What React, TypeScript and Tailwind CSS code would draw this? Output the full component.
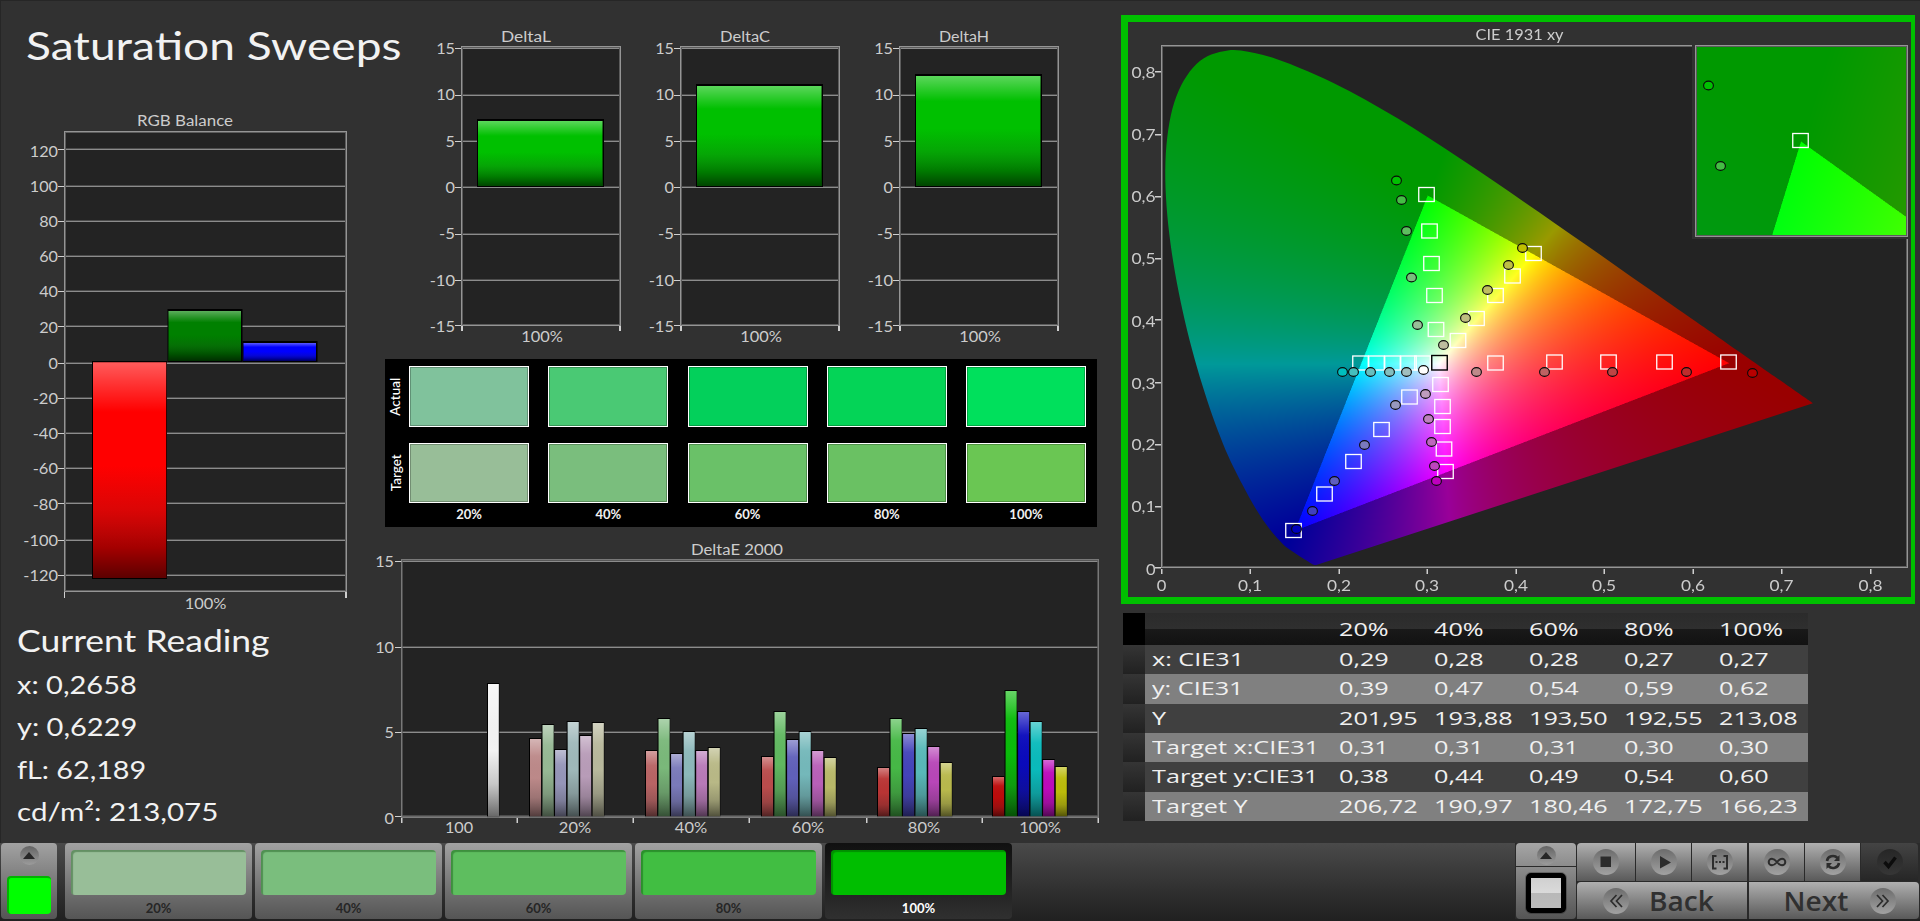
import React, { useLayoutEffect, useRef } from "react";

const FONT = 'Lato, "Open Sans", sans-serif';

/* ---------- shared chart pieces ---------- */

function Label({ x, y, w, size = 15.5, anchor = "start", fill = "#cccccc", children }: {
  x: number; y: number; w?: number; size?: number; anchor?: "start" | "middle" | "end"; fill?: string; children: string;
}) {
  return (
    <text x={x} y={y} fontFamily={FONT} fontSize={size} fill={fill} textAnchor={anchor} textLength={w} lengthAdjust="spacingAndGlyphs">
      {children}
    </text>
  );
}

function axisWidth(s: string) {
  let w = 0;
  for (const c of s) w += c === "-" ? 6.5 : c === "," ? 5 : c === "%" ? 13.5 : 9.4;
  return w;
}

function Axis({ x, y, anchor, children }: { x: number; y: number; anchor: "middle" | "end"; children: string }) {
  return <Label x={x} y={y} w={axisWidth(children)} anchor={anchor}>{children}</Label>;
}

function Shades() {
  return (
    <defs>
      <linearGradient id="gloss" x1="0" y1="0" x2="0" y2="1">
        <stop offset="0" stopColor="#fff" stopOpacity="0.36" />
        <stop offset="0.1" stopColor="#fff" stopOpacity="0.2" />
        <stop offset="0.23" stopColor="#fff" stopOpacity="0" />
        <stop offset="0.48" stopColor="#202020" stopOpacity="0" />
        <stop offset="0.68" stopColor="#202020" stopOpacity="0.16" />
        <stop offset="0.86" stopColor="#000" stopOpacity="0.36" />
        <stop offset="1" stopColor="#000" stopOpacity="0.64" />
      </linearGradient>
      <linearGradient id="sheen" x1="0" y1="0" x2="0" y2="1">
        <stop offset="0" stopColor="#fff" stopOpacity="0.38" />
        <stop offset="0.22" stopColor="#fff" stopOpacity="0.04" />
        <stop offset="0.5" stopColor="#202020" stopOpacity="0" />
        <stop offset="0.75" stopColor="#202020" stopOpacity="0.2" />
        <stop offset="1" stopColor="#000" stopOpacity="0.58" />
      </linearGradient>
    </defs>
  );
}

function Bar({ x, y, w, h, color, shade = "gloss", edge = 2 }: { x: number; y: number; w: number; h: number; color: string; shade?: string; edge?: number }) {
  return (
    <g>
      <rect x={x} y={y} width={w} height={h} fill="#000" />
      <rect x={x + 1} y={y + edge} width={w - edge - 0.5} height={h - edge - 1} fill={color} />
      <rect x={x + 1} y={y + edge} width={w - edge - 0.5} height={h - edge - 1} fill={`url(#${shade})`} />
    </g>
  );
}

function Frame({ l, t, r, b }: { l: number; t: number; r: number; b: number }) {
  return (
    <g fill="none" shapeRendering="crispEdges">
      <rect x={l + 1.5} y={t + 1.5} width={r - l - 3} height={b - t - 3} stroke="#5c5c5c" />
      <rect x={l + 0.5} y={t + 0.5} width={r - l - 1} height={b - t - 1} stroke="#959595" />
    </g>
  );
}

function GridLine({ l, r, y }: { l: number; r: number; y: number }) {
  return (
    <g shapeRendering="crispEdges">
      <rect x={l} y={y - 1} width={r - l} height={1} fill="#4c4c4c" />
      <rect x={l} y={y} width={r - l} height={1} fill="#8c8c8c" />
      <rect x={l - 6} y={y} width={6} height={1} fill="#cfcfcf" />
    </g>
  );
}

/* ---------- RGB balance ---------- */

const rgbTicks: [string, number, number][] = [
  ["120", 149, 157], ["100", 186, 192], ["80", 221, 227], ["60", 256, 262], ["40", 291, 297], ["20", 326, 333], ["0", 363, 368.5],
  ["-20", 398, 403.5], ["-40", 433, 438.5], ["-60", 468, 473.5], ["-80", 503, 510], ["-100", 540, 545.5], ["-120", 575, 580.5],
];

function RgbBalance() {
  return (
    <svg viewBox="0 100 385 515" className="h-[515px] w-[385px] shrink-0 overflow-visible">
      <Shades />
      <Label x={137} y={126} w={96}>RGB Balance</Label>
      <rect x={64} y={131} width={283} height={461} fill="#232323" />
      {rgbTicks.map(([s, y, b]) => (
        <g key={s}>
          <GridLine l={64} r={346} y={y} />
          <Axis x={58} y={b} anchor="end">{s}</Axis>
        </g>
      ))}
      <Frame l={64} t={131} r={347} b={592} />
      <Bar x={92} y={361} w={75} h={218} color="#ff0000" edge={1.3} />
      <Bar x={167.5} y={309} w={75} h={53} color="#008000" />
      <Bar x={242.5} y={341} w={75} h={21} color="#0000ff" />
      <rect x={64} y={592} width={1} height={6} fill="#cfcfcf" />
      <rect x={345} y={592} width={2} height={6} fill="#cfcfcf" />
      <Axis x={205.5} y={609} anchor="middle">100%</Axis>
    </svg>
  );
}

/* ---------- Delta L / C / H ---------- */

const deltaTicks: [string, number, number][] = [
  ["15", 48, 53.5], ["10", 95, 99.5], ["5", 141, 146.5], ["0", 187, 192.5], ["-5", 234, 238.5], ["-10", 280, 285.5], ["-15", 325, 331.5],
];

function DeltaChart({ title, origin, width, left, top }: { title: string; origin: number; width: number; left: number; top: number }) {
  const right = left + 160;
  return (
    <svg viewBox={`${origin} 0 ${width} 350`} style={{ width }} className="h-[350px] shrink-0 overflow-visible">
      <Label x={left + 40} y={41.5} w={50}>{title}</Label>
      <rect x={left} y={46} width={160} height={280} fill="#232323" />
      {deltaTicks.map(([s, y, b]) => (
        <g key={s}>
          <GridLine l={left} r={right - 1} y={y} />
          <Axis x={left - 6} y={b} anchor="end">{s}</Axis>
        </g>
      ))}
      <Frame l={left} t={46} r={right} b={326} />
      <Bar x={left + 16} y={top} w={127} h={187 - top} color="#00c000" />
      <rect x={left} y={326} width={2} height={5} fill="#cfcfcf" />
      <rect x={right - 2} y={326} width={2} height={5} fill="#cfcfcf" />
      <Axis x={left + 81} y={341.5} anchor="middle">100%</Axis>
    </svg>
  );
}

/* ---------- swatches ---------- */

const percents = ["20%", "40%", "60%", "80%", "100%"];
const actual = ["bg-[#80c29c]", "bg-[#4ac974]", "bg-[#03d05b]", "bg-[#04d457]", "bg-[#00e05c]"];
const target = ["bg-[#98be98]", "bg-[#7abe7d]", "bg-[#6ac168]", "bg-[#6ac163]", "bg-[#6ac653]"];

function SwatchRow({ name, colors, height }: { name: string; colors: string[]; height: string }) {
  return (
    <div className={`flex ${height}`}>
      <div className="flex w-6 items-center justify-center pr-0.5">
        <span className="-rotate-90 text-[13.5px] leading-none font-medium whitespace-nowrap text-white">{name}</span>
      </div>
      <div className="flex w-[677px] justify-between">
        {colors.map((c) => (
          <div key={c} className="w-[120px] border border-white">
            <div className={`h-full border border-black/25 ${c}`} />
          </div>
        ))}
      </div>
    </div>
  );
}

function Swatches() {
  return (
    <div className="mt-[9px] h-[168px] w-[712px] shrink-0 bg-black pt-[7px]">
      <SwatchRow name="Actual" colors={actual} height="h-[61px]" />
      <div className="h-4" />
      <SwatchRow name="Target" colors={target} height="h-[60px]" />
      <div className="ml-6 flex w-[677px] justify-between pt-[4px]">
        {percents.map((p) => (
          <div key={p} className="w-[120px] text-center text-[13px] leading-[14px] font-bold text-[#f0f0f0]">{p}</div>
        ))}
      </div>
    </div>
  );
}

/* ---------- DeltaE 2000 ---------- */

const deGroups: { x: number; tops: number[]; colors: string[] }[] = [
  { x: 529, tops: [738, 724, 749, 721, 735, 722], colors: ["#bc8989", "#96b894", "#9595b8", "#9fb8ba", "#b89cb8", "#b8b89c"] },
  { x: 645, tops: [750, 718, 753, 731, 750, 747], colors: ["#b96464", "#7ab87a", "#7a7aba", "#8cb8ba", "#b87ab8", "#b8b886"] },
  { x: 761, tops: [756, 711, 739, 731, 750, 757], colors: ["#b94c4c", "#60b860", "#6060ba", "#74b8ba", "#b860b8", "#b8b868"] },
  { x: 877, tops: [767, 718, 733, 728, 746, 762], colors: ["#b93434", "#46b846", "#4444ba", "#58b8b8", "#b846b8", "#b8b84c"] },
  { x: 992, tops: [776, 690, 711, 721, 759, 766], colors: ["#bb0b0b", "#0abb0a", "#0a0abb", "#0ababb", "#bb0abb", "#bbbb0a"] },
];

function DeltaE() {
  return (
    <svg viewBox="385 527 713 316" className="h-[316px] w-[713px] shrink-0 overflow-visible">
      <Label x={691} y={555} w={92}>DeltaE 2000</Label>
      <rect x={401} y={559} width={698} height={258} fill="#232323" />
      {([["15", 561, 567], ["10", 647, 653], ["5", 732, 738], ["0", 816, 824]] as [string, number, number][]).map(([s, y, b]) => (
        <g key={s}>
          <GridLine l={401} r={1098} y={y} />
          <Axis x={394} y={b} anchor="end">{s}</Axis>
        </g>
      ))}
      <Bar x={487} y={683} w={12.3} h={135} color="#f2f2f2" shade="sheen" edge={1} />
      {deGroups.map((g) => g.tops.map((t, i) => (
        <Bar key={`${g.x}-${i}`} x={g.x + i * 12.55} y={t} w={12.55} h={818 - t} color={g.colors[i]} shade="sheen" edge={1} />
      )))}
      <g opacity={0.75}><Frame l={401} t={559} r={1099} b={818} /></g>
      {[401, 516.5, 632.5, 748.5, 866, 981.5, 1097.5].map((x) => (
        <rect key={x} x={x} y={818} width={1.5} height={5} fill="#cfcfcf" />
      ))}
      {([["100", 459], ["20%", 575], ["40%", 691], ["60%", 808], ["80%", 924], ["100%", 1040]] as [string, number][]).map(([s, x]) => (
        <Axis key={s} x={x} y={832.5} anchor="middle">{s}</Axis>
      ))}
    </svg>
  );
}

/* ---------- CIE 1931 diagram ---------- */

const locus: [number, number][] = [
  [0.1741, 0.005], [0.1726, 0.0048], [0.1714, 0.0051], [0.1689, 0.0069], [0.1644, 0.0109], [0.1566, 0.0177], [0.144, 0.0297],
  [0.1355, 0.0399], [0.1241, 0.0578], [0.1096, 0.0868], [0.0913, 0.1327], [0.0687, 0.2007], [0.0454, 0.295], [0.0235, 0.4127],
  [0.0082, 0.5384], [0.0039, 0.6548], [0.0139, 0.7502], [0.0389, 0.812], [0.0743, 0.8338], [0.1142, 0.8262], [0.1547, 0.8059],
  [0.1929, 0.7816], [0.2296, 0.7543], [0.2658, 0.7243], [0.3016, 0.6923], [0.3373, 0.6589], [0.3731, 0.6245], [0.4087, 0.5896],
  [0.4441, 0.5547], [0.4788, 0.5202], [0.5125, 0.4866], [0.5448, 0.4544], [0.5752, 0.4242], [0.6029, 0.3965], [0.627, 0.3725],
  [0.6658, 0.334], [0.6915, 0.3083], [0.719, 0.2809], [0.7347, 0.2653],
];

const PANEL = { x: 1128, y: 22, w: 783, h: 575 };

function chroma(x: number, y: number): [number, number, number] {
  const yy = Math.max(y, 0.0005);
  const X = x / yy;
  const Z = (1 - x - yy) / yy;
  const r = 3.2406 * X - 1.5372 - 0.4986 * Z;
  const g = -0.9689 * X + 1.8758 + 0.0415 * Z;
  const b = 0.0557 * X - 0.204 + 1.057 * Z;
  const k = (r < 0 || g < 0 || b < 0 ? 153 : 255) / Math.max(r, g, b);
  return [Math.max(r, 0) * k, Math.max(g, 0) * k, Math.max(b, 0) * k];
}

function field(w: number, h: number, toXY: (px: number, py: number) => [number, number]) {
  const c = document.createElement("canvas");
  c.width = w;
  c.height = h;
  const ctx = c.getContext("2d")!;
  const img = ctx.createImageData(w, h);
  for (let j = 0; j < h; j++) {
    for (let i = 0; i < w; i++) {
      let r = 0, g = 0, b = 0;
      for (let s = 0; s < 4; s++) {
        const [x, y] = toXY(i + 0.25 + (s & 1) * 0.5, j + 0.25 + (s >> 1) * 0.5);
        const v = chroma(x, y);
        r += v[0]; g += v[1]; b += v[2];
      }
      const o = (j * w + i) * 4;
      img.data[o] = r / 4;
      img.data[o + 1] = g / 4;
      img.data[o + 2] = b / 4;
      img.data[o + 3] = 255;
    }
  }
  ctx.putImageData(img, 0, 0);
  return c;
}

function Gamut() {
  const ref = useRef<HTMLCanvasElement>(null);
  useLayoutEffect(() => {
    const ctx = ref.current!.getContext("2d")!;
    ctx.setTransform(1, 0, 0, 1, -PANEL.x, -PANEL.y);
    ctx.fillStyle = "#232323";
    ctx.fillRect(1162, 45, 746, 523);

    const pts = locus.map(([x, y]) => [1162 + 886 * x, 568 - 620.8 * y]);
    ctx.save();
    ctx.beginPath();
    ctx.moveTo(pts[0][0], pts[0][1]);
    for (let i = 0; i < pts.length - 1; i++) {
      const a = pts[Math.max(i - 1, 0)], b = pts[i], c = pts[i + 1], d = pts[Math.min(i + 2, pts.length - 1)];
      ctx.bezierCurveTo(b[0] + (c[0] - a[0]) / 6, b[1] + (c[1] - a[1]) / 6, c[0] - (d[0] - b[0]) / 6, c[1] - (d[1] - b[1]) / 6, c[0], c[1]);
    }
    ctx.closePath();
    ctx.clip();
    ctx.drawImage(field(746, 523, (px, py) => [px / 886, (523 - py) / 620.8]), 1162, 45);
    ctx.restore();

    ctx.fillStyle = "#313131";
    ctx.fillRect(1692, 44, 219, 195);
    ctx.drawImage(field(213, 192, (px, py) => [0.3 + (px + 1695 - 1801) / 2702, 0.6 - (py + 45 - 141.5) / 2440]), 1695, 45);
  }, []);
  return <canvas ref={ref} width={PANEL.w} height={PANEL.h} className="[grid-area:1/1]" />;
}

const squares: [number, number][] = [
  [1426.5, 194.5], [1429.5, 231], [1431.5, 263.5], [1434.5, 295.5], [1436, 329.5],
  [1533.5, 253.5], [1512.5, 276], [1495.5, 295.5], [1476.5, 318.5], [1458, 340.5],
  [1360.5, 363], [1376.5, 363], [1392.5, 363], [1408.5, 363], [1422.5, 363],
  [1495.5, 363], [1554.5, 362], [1608.5, 362], [1664.5, 362], [1728.5, 362],
  [1440.5, 384.5], [1442.5, 406.5], [1442.5, 426.5], [1444, 449], [1445.5, 471.5],
  [1409.5, 397], [1381.5, 429.5], [1353.5, 461.5], [1324.5, 494], [1293.5, 530.5],
  [1800.5, 140.5],
];

const dots: [number, number, string][] = [
  [1396.5, 180.5, "#00c000"], [1401.5, 200, "#44be44"], [1406.5, 231, "#5ebe5f"], [1411.5, 277.5, "#7abe7d"], [1417.5, 325, "#98be98"],
  [1522.5, 248, "#c0c000"], [1508.5, 265, "#bebe44"], [1487.5, 290, "#bebe60"], [1465.5, 318, "#bebe80"], [1443.5, 345, "#bebe9e"],
  [1342.5, 372, "#00bebe"], [1353.5, 372, "#44bebe"], [1370.5, 372, "#68bebe"], [1389.5, 372, "#84bebe"], [1406.5, 372, "#a0bebe"],
  [1423.5, 370, "#ffffff"],
  [1476.5, 372, "#be8a8a"], [1544.5, 372, "#be6262"], [1612.5, 372, "#be4444"], [1686.5, 372, "#be2c2c"], [1752.5, 373, "#b80000"],
  [1425.5, 394, "#be9cbe"], [1428.5, 419, "#be80be"], [1431.5, 442, "#be66be"], [1434.5, 466, "#be44be"], [1436.5, 481, "#be00be"],
  [1395.5, 405, "#9898be"], [1364.5, 445, "#7a7abe"], [1334.5, 481, "#5e5ebe"], [1312.5, 511, "#4040be"], [1296.5, 529, "#0000be"],
  [1708.5, 85.5, "#00c000"], [1720.5, 166, "#44be44"],
];

const cieY: [string, number, number][] = [
  ["0,8", 71, 78], ["0,7", 134, 140], ["0,6", 196, 202], ["0,5", 258, 263.5], ["0,4", 319, 327], ["0,3", 382, 388.5], ["0,2", 444, 450], ["0,1", 506, 512], ["0", 567, 575],
];
const cieX: [string, number][] = [
  ["0", 1161.5], ["0,1", 1250], ["0,2", 1339], ["0,3", 1427], ["0,4", 1516], ["0,5", 1604], ["0,6", 1693], ["0,7", 1781.5], ["0,8", 1870.5],
];

function CiePanel() {
  return (
    <div className="mt-[15px] grid h-[589px] w-[794px] shrink-0 border-y-[7px] border-r-[4px] border-l-[7px] border-[#00c000]">
      <Gamut />
      <svg viewBox={`${PANEL.x} ${PANEL.y} ${PANEL.w} ${PANEL.h}`} className="h-[575px] w-[783px] [grid-area:1/1]">
        <Label x={1475.5} y={40} w={88}>CIE 1931 xy</Label>
        <g shapeRendering="crispEdges">
          <rect x={1162} y={45} width={530} height={1} fill="#959595" />
          <rect x={1162} y={46} width={530} height={1} fill="#5c5c5c" />
          <rect x={1161} y={45} width={1} height={523} fill="#959595" />
          <rect x={1162} y={46} width={1} height={521} fill="#5c5c5c" />
          <rect x={1907} y={239} width={1} height={329} fill="#959595" />
          <rect x={1906} y={239} width={1} height={328} fill="#5c5c5c" />
          <rect x={1162} y={566} width={745} height={1} fill="#5c5c5c" />
          <rect x={1161} y={567} width={747} height={1} fill="#959595" />
        </g>
        <Frame l={1695} t={45} r={1908} b={237} />
        {cieY.map(([s, y, b]) => (
          <g key={s}>
            <rect x={1155} y={y} width={6} height={1.5} fill="#cfcfcf" />
            <Label x={1155.5} y={b} size={16} w={s.length > 1 ? 24 : 9.6} anchor="end">{s}</Label>
          </g>
        ))}
        {cieX.map(([s, x]) => (
          <g key={s}>
            <rect x={x - 0.5} y={569} width={1.5} height={5} fill="#cfcfcf" />
            <Label x={x} y={590.5} size={16} w={s.length > 1 ? 24 : 9.6} anchor="middle">{s}</Label>
          </g>
        ))}
        {squares.map(([x, y], i) => (
          <rect key={i} x={x - 7.75} y={y - 7} width={15.5} height={14} fill="none" stroke="#fff" strokeWidth={1.3} />
        ))}
        <rect x={1431.75} y={355.5} width={15.5} height={14.5} fill="none" stroke="#000" strokeWidth={1.4} />
        {dots.map(([x, y, c], i) => (
          <ellipse key={i} cx={x} cy={y} rx={4.9} ry={4.4} fill={c} stroke="#0a0a0a" strokeWidth={1.1} />
        ))}
      </svg>
    </div>
  );
}

/* ---------- readings table ---------- */

const rows: [string, string[], string][] = [
  ["x: CIE31", ["0,29", "0,28", "0,28", "0,27", "0,27"], "h-[29px]"],
  ["y: CIE31", ["0,39", "0,47", "0,54", "0,59", "0,62"], "h-[30px]"],
  ["Y", ["201,95", "193,88", "193,50", "192,55", "213,08"], "h-[29px]"],
  ["Target x:CIE31", ["0,31", "0,31", "0,31", "0,30", "0,30"], "h-[29px]"],
  ["Target y:CIE31", ["0,38", "0,44", "0,49", "0,54", "0,60"], "h-[30px]"],
  ["Target Y", ["206,72", "190,97", "180,46", "172,75", "166,23"], "h-[29px]"],
];

function Wide({ children }: { children: string }) {
  return <span className="inline-block origin-left scale-x-[1.44] whitespace-nowrap">{children}</span>;
}

function Readings() {
  return (
    <div className="mt-[9px] ml-0.5 w-[685px] font-['Open_Sans',sans-serif] text-[17.5px] leading-[28px] text-[#f0f0f0]">
      <div className="flex h-8">
        <div className="w-[22px] shrink-0 bg-black" />
        <div className="grid flex-1 grid-cols-[194px_95px_95px_95px_95px_89px] bg-[linear-gradient(#2b2b2b,#2f2f2f_50%,#191919_50%,#121212)] pt-[2px]">
          <div />
          {percents.map((p) => <div key={p} className="min-w-0"><Wide>{p}</Wide></div>)}
        </div>
      </div>
      {rows.map(([name, vals, h], i) => (
        <div key={name} className={`flex ${h}`}>
          <div className="w-[22px] shrink-0 bg-linear-to-b from-[#353535] to-[#212121]" />
          <div className={`grid flex-1 grid-cols-[194px_95px_95px_95px_95px_89px] ${i % 2 ? "bg-[#808080]" : "bg-[#404040]"}`}>
            <div className="pl-[7px]"><Wide>{name}</Wide></div>
            {vals.map((v, j) => <div key={j} className="min-w-0"><Wide>{v}</Wide></div>)}
          </div>
        </div>
      ))}
    </div>
  );
}

/* ---------- bottom bar ---------- */

const steps: [string, string][] = [
  ["20%", "bg-[#98be98]"], ["40%", "bg-[#7abe7d]"], ["60%", "bg-[#5ebe5f]"], ["80%", "bg-[#41be42]"], ["100%", "bg-[#00be00]"],
];

function UpKnob() {
  return (
    <div className="flex size-[19px] items-center justify-center rounded-full bg-linear-to-b from-[#646464] to-[#9c9c9c]">
      <svg viewBox="0 0 12 7" className="h-[7px] w-3"><path d="M6 0L12 7H0Z" fill="#262626" /></svg>
    </div>
  );
}

function Knob({ children, dark = false }: { children: React.ReactNode; dark?: boolean }) {
  return (
    <div className={`flex size-[26px] items-center justify-center rounded-full bg-linear-to-b ${dark ? "from-[#262626] to-[#363636]" : "from-[#6c6c6c] to-[#a2a2a2]"}`}>
      <svg viewBox="0 0 20 20" className="size-5" fill="none" stroke={dark ? "#0c0c0c" : "#2c2c2c"} strokeWidth={2}>{children}</svg>
    </div>
  );
}

const key = "flex items-center justify-center bg-linear-to-b from-[#b0b0b0] to-[#5a5a5a]";

function BottomBar() {
  return (
    <div className="flex h-[78px] w-full items-start bg-linear-to-b from-[#4a4a4a] to-[#202020] pl-px">
      <div className="flex h-[76px] w-14 flex-col items-center rounded-[4px] bg-linear-to-b from-[#a2a2a2] to-[#555555] pt-[3px]">
        <UpKnob />
        <div className="mt-[11px] h-[38px] w-11 rounded-[4px] border-t-2 border-l-2 border-[#00b400] bg-[#00ff00]" />
      </div>
      <div className="ml-2 flex gap-[3px]">
        {steps.map(([p, c], i) => {
          const on = i === 4;
          return (
            <div key={p} className={`flex h-[76px] w-[187px] flex-col items-center rounded-[4px] bg-linear-to-b pt-[7px] ${on ? "from-[#101010] to-[#303030]" : "from-[#a2a2a2] to-[#555555]"}`}>
              <div className={`h-[45px] w-[175px] rounded-[4px] shadow-[inset_2px_2px_1px_rgba(0,60,0,0.35)] ${c}`} />
              <span className={`mt-[6px] text-[13px] leading-[14px] font-bold ${on ? "text-white" : "text-[#262626]"}`}>{p}</span>
            </div>
          );
        })}
      </div>
      <div className="ml-auto flex gap-px bg-[#2a2a2a] pr-px pl-px">
        <div className="flex w-[60px] flex-col gap-px">
          <div className="flex h-[23px] justify-center rounded-t-[4px] bg-linear-to-b from-[#a6a6a6] to-[#8c8c8c] pt-[3px]"><UpKnob /></div>
          <div className="flex h-[52px] justify-center rounded-b-[4px] bg-linear-to-b from-[#8c8c8c] to-[#555555] pt-[6px]">
            <div className="size-10 rounded-[5px] border-5 border-black bg-[linear-gradient(#d0d0d0,#dadada_50%,#b8b8b8_50%,#bcbcbc)] outline outline-black/25" />
          </div>
        </div>
        <div className="flex flex-col gap-px">
          <div className="flex gap-px">
            <div className={`${key} h-[38px] w-[58px] rounded-tl-[4px]`}><Knob><rect x={4.5} y={4.5} width={10.5} height={10.5} fill="#2c2c2c" stroke="none" /></Knob></div>
            <div className={`${key} h-[38px] w-[55px]`}><Knob><path d="M6 4L17 10.500L6 16.500Z" fill="#2c2c2c" stroke="none" /></Knob></div>
            <div className={`${key} h-[38px] w-[55px]`}><Knob><path d="M6.500 4H3V16.500H6.500M13.500 4H17V16.500H13.500" /><path d="M5.500 10H14.500" strokeDasharray="2 1.500" /></Knob></div>
            <div className={`${key} ml-px h-[38px] w-[55px]`}><Knob><path d="M10 10C8 7.500 6.800 6.700 5 6.700A3.300 3.300 0 0 0 5 13.300C6.800 13.300 8 12.500 10 10C12 7.500 13.200 6.700 15 6.700A3.300 3.300 0 0 1 15 13.300C13.200 13.300 12 12.500 10 10Z" /></Knob></div>
            <div className={`${key} h-[38px] w-[55px]`}><Knob><path d="M4 9A6 5.500 0 0 1 14.500 6M16 11A6 5.500 0 0 1 5.500 14" strokeWidth={2.6} /><path d="M16.500 3V9H11ZM3.500 17V11H9Z" fill="#2c2c2c" stroke="none" /></Knob></div>
            <div className="flex h-[38px] w-[57px] items-center justify-center rounded-tr-[4px] bg-linear-to-b from-[#444444] to-[#262626]"><Knob dark><path d="M4.500 10L8.500 14.500L15.500 5.500" strokeWidth={3.4} /></Knob></div>
          </div>
          <div className="flex gap-0.5 font-['Open_Sans',sans-serif] text-[27px] leading-none font-semibold text-[#303030]">
            <div className={`${key} h-[37px] w-[170px] justify-start gap-5 rounded-tl-[4px] pl-[26px]`}>
              <Knob><path d="M10.500 4L5 10L10.500 16M16 4L10.500 10L16 16" strokeWidth={1.7} /></Knob>
              <span className="inline-block origin-left scale-x-[1.04]">Back</span>
            </div>
            <div className={`${key} h-[37px] w-[170px] justify-end gap-[22px] rounded-r-[4px] pr-[23px]`}>
              <span className="inline-block origin-right scale-x-[1.04]">Next</span>
              <Knob><path d="M4 4L9.500 10L4 16M9.500 4L15 10L9.500 16" strokeWidth={1.7} /></Knob>
            </div>
          </div>
        </div>
      </div>
    </div>
  );
}

/* ---------- page ---------- */

export default function App() {
  return (
    <div className="flex h-[921px] w-[1920px] flex-col overflow-hidden bg-[#313131] font-[Lato,sans-serif] shadow-[inset_1px_1px_0_#262626]">
      <div className="flex h-[843px] shrink-0">
        <div className="flex w-[385px] shrink-0 flex-col">
          <h1 className="h-[100px] pt-[21px] pl-[26px] text-[39px] leading-[48px] whitespace-nowrap text-[#f2f2f2]">
            <span className="inline-block origin-left scale-x-[1.183]">Saturation Sweeps</span>
          </h1>
          <RgbBalance />
          <div className="flex flex-col pt-[6px] pl-[16.5px] text-[25px] leading-[42px] whitespace-nowrap text-[#f2f2f2]">
            <h2 className="text-[30px] leading-[38px]"><span className="inline-block origin-left scale-x-[1.183]">Current Reading</span></h2>
            <p className="mt-[4px]"><span className="inline-block origin-left scale-x-[1.16]">x: 0,2658</span></p>
            <p><span className="inline-block origin-left scale-x-[1.16]">y: 0,6229</span></p>
            <p className="mt-px"><span className="inline-block origin-left scale-x-[1.15]">fL: 62,189</span></p>
            <p><span className="inline-block origin-left scale-x-[1.18]">cd/m²: 213,075</span></p>
          </div>
        </div>
        <div className="flex w-[713px] shrink-0 flex-col">
          <div className="flex">
            <DeltaChart title="DeltaL" origin={385} width={245} left={461} top={119} />
            <DeltaChart title="DeltaC" origin={630} width={218} left={680} top={84} />
            <DeltaChart title="DeltaH" origin={848} width={250} left={899} top={74} />
          </div>
          <Swatches />
          <DeltaE />
        </div>
        <div className="ml-[23px] flex flex-col">
          <CiePanel />
          <Readings />
        </div>
      </div>
      <BottomBar />
    </div>
  );
}
